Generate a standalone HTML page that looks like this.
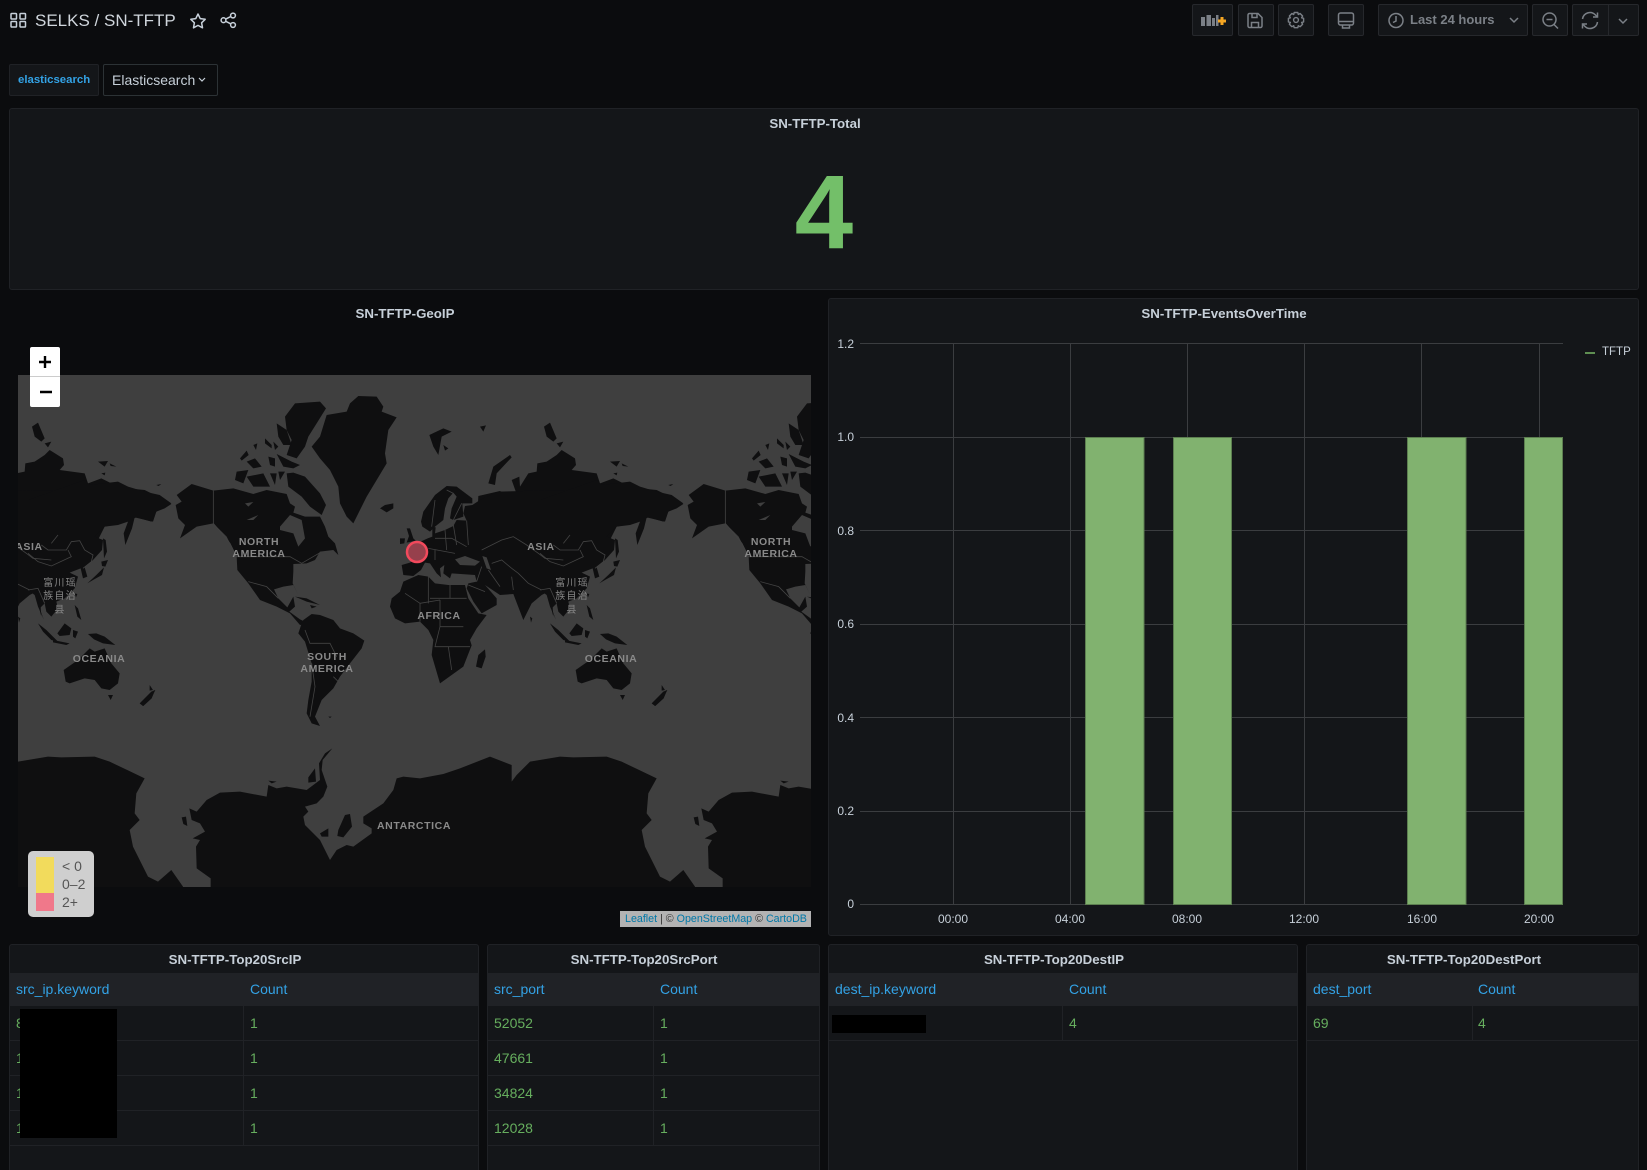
<!DOCTYPE html>
<html lang="en">
<head>
<meta charset="utf-8">
<title>SELKS / SN-TFTP</title>
<style>
html,body{margin:0;padding:0;width:1647px;height:1170px;overflow:hidden;background:#0b0c0e;font-family:"Liberation Sans","Noto Sans CJK SC",sans-serif;color:#c7d0d9}
*{box-sizing:border-box}
#root{position:relative;width:1647px;height:1170px;overflow:hidden}
.a{position:absolute}
.panel{position:absolute;background:#141619;border:1px solid #202226;border-radius:3px}
.ttl{position:absolute;font-size:13.3px;font-weight:bold;color:#c7d0d9;transform:translateX(-50%);white-space:nowrap;line-height:16px}
.btn{position:absolute;top:4px;height:32px;background:#141619;border:1px solid #26282c;border-radius:2px}
.btn svg{position:absolute;left:0;top:0}
.th{position:absolute;height:33px;top:973px;background:#202226}
.t{position:absolute;font-size:14px;line-height:16px;white-space:nowrap}
.b{color:#33a2e5}
.g{color:#66ae5e}
.hl{position:absolute;height:1px;background:#202226}
.vl{position:absolute;width:1px;background:#202226}
.yl{position:absolute;font-size:12px;line-height:14px;width:40px;text-align:right;left:814px;color:#c7d0d9}
.xl{position:absolute;font-size:12px;line-height:14px;width:50px;text-align:center;top:912px;color:#c7d0d9}
</style>
</head>
<body>
<div id="root">
<!-- top bar -->
<svg class="a" style="left:0;top:0" width="260" height="40" fill="none" stroke="#c7d0d9" stroke-width="1.5">
<rect x="11" y="13.5" width="5.5" height="5.5" rx=".8"/><rect x="20" y="13.5" width="5.5" height="5.5" rx=".8"/><rect x="11" y="21.5" width="5.5" height="5.5" rx=".8"/><rect x="20" y="21.5" width="5.5" height="5.5" rx=".8"/>
<path d="M198 14l2.2 4.600 5 .7-3.600 3.500.9 5-4.500-2.400-4.500 2.400.9-5-3.600-3.500 5-.7z" stroke-linejoin="round"/>
<circle cx="233" cy="15.500" r="2.400"/><circle cx="233" cy="25" r="2.400"/><circle cx="223.500" cy="20.200" r="2.400"/><path d="M225.700 19.100l5-2.500M225.700 21.300l5 2.500"/>
</svg>
<div class="t" style="left:35px;top:10px;font-size:17px;line-height:22px;color:#d0d6dc">SELKS / SN-TFTP</div>

<div class="btn" style="left:1192px;width:41px"><svg width="41" height="30"><g fill="#7b8087"><rect x="8" y="12" width="4" height="9"/><rect x="13.500" y="10" width="4.500" height="11"/><rect x="19" y="13" width="3" height="8"/><rect x="23" y="10" width="2.500" height="11"/></g><path d="M25 14.500h8v3h-8zM27.500 12h3v8h-3z" fill="#f5a623"/></svg></div>
<div class="btn" style="left:1238px;width:36px"><svg width="36" height="30" fill="none" stroke="#7b8087" stroke-width="1.5"><path d="M10.500 8.500h8.500l4 4v8.500a1.500 1.500 0 0 1-1.500 1.500h-11A1.500 1.500 0 0 1 9 21V10A1.500 1.500 0 0 1 10.500 8.500z"/><path d="M13 8.500v4h5v-4M12.500 22.500v-5h7v5"/></svg></div>
<div class="btn" style="left:1278px;width:36px"><svg width="36" height="30" fill="none" stroke="#7b8087" stroke-width="1.4"><circle cx="17" cy="15" r="2.400"/><path d="M15.200 8.500h3.600l.5 2 1.800-1 2.500 2.500-1 1.800 2 .5v3.600l-2 .5 1 1.800-2.500 2.500-1.800-1-.5 2h-3.600l-.5-2-1.800 1-2.500-2.500 1-1.800-2-.5v-3.600l2-.5-1-1.800 2.500-2.500 1.800 1z" transform="translate(0,-1)" stroke-linejoin="round"/></svg></div>
<div class="btn" style="left:1328px;width:36px"><svg width="36" height="30" fill="none" stroke="#7b8087" stroke-width="1.5"><rect x="9.500" y="8" width="15" height="12" rx="2"/><path d="M9.500 16.500h15M13.500 20v3h7v-3"/></svg></div>
<div class="btn" style="left:1378px;width:150px"><svg width="150" height="30" fill="none" stroke="#7b8087" stroke-width="1.5"><circle cx="17" cy="15.500" r="7"/><path d="M17 11v5l-3 1.500"/><path d="M131 13l4 4 4-4"/></svg><div class="t" style="left:31px;top:7px;font-weight:bold;font-size:13px;color:#7b8087">Last 24 hours</div></div>
<div class="btn" style="left:1532px;width:36px"><svg width="36" height="30" fill="none" stroke="#7b8087" stroke-width="1.5"><circle cx="16.500" cy="14.500" r="6.500"/><path d="M13.500 14.500h6M21 19.500l4 4"/></svg></div>
<div class="btn" style="left:1572px;width:37px;border-radius:2px 0 0 2px"><svg width="37" height="30" fill="none" stroke="#7b8087" stroke-width="1.5"><path d="M9.500 14a7.500 7.500 0 0 1 13-4l2 2M24.500 17a7.500 7.500 0 0 1-13 4l-2-2"/><path d="M24.500 7.500v4.500h-4.500M9.500 23.500v-4.500h4.500"/></svg></div>
<div class="btn" style="left:1608px;width:31px;border-radius:0 2px 2px 0"><svg width="31" height="30" fill="none" stroke="#7b8087" stroke-width="1.5"><path d="M10 14l4 4 4-4"/></svg></div>

<!-- variables -->
<div class="a" style="left:9px;top:64px;width:90px;height:32px;background:#141619;border:1px solid #202226;border-radius:2px"></div>
<div class="t b" style="left:18px;top:72px;font-size:11.400px;font-weight:bold">elasticsearch</div>
<div class="a" style="left:103px;top:64px;width:115px;height:32px;border:1px solid #2c3235;border-radius:2px;background:#0b0c0e"></div>
<div class="t" style="left:112px;top:72px">Elasticsearch</div>
<svg class="a" style="left:197px;top:76px" width="10" height="8" fill="none" stroke="#c7d0d9" stroke-width="1.2"><path d="M2 2l3 3 3-3"/></svg>

<!-- total -->
<div class="panel" style="left:9px;top:108px;width:1630px;height:182px"></div>
<div class="ttl" style="left:815px;top:116px">SN-TFTP-Total</div>
<div class="a" style="left:724px;top:148px;width:200px;text-align:center;font-size:105px;line-height:130px;font-weight:bold;color:#73bf69">4</div>

<!-- map -->
<div class="ttl" style="left:405px;top:306px">SN-TFTP-GeoIP</div>
<svg class="a" style="left:0;top:0" width="1647" height="1170">
<defs>
<clipPath id="mc"><rect x="18" y="375" width="793" height="512"/></clipPath>
<g id="w">
 <g fill="#0f0f10">
 <!-- N America, Greenland, arctic -->
 <g transform="translate(0,330) scale(.33333)">
  <path d="M527 525L545 515 530 495 575 462 640 482 700 475 760 492 800 480 860 492 870 520 885 530 880 548 915 560 960 560 975 590 985 620 1005 640 1015 675 1000 660 960 665 945 690 920 700 880 702 880 725 878 760 895 795 880 765 850 770 822 778 835 805 862 832 880 800 885 830 868 845 900 868 925 880 900 885 870 850 830 830 780 810 745 760 712 720 710 680 695 650 680 620 640 580 590 590 540 625 555 585 535 565Z"/>
  <path d="M1075 198L1130 200 1150 230 1145 245 1190 262 1165 300 1155 370 1160 400 1130 450 1100 500 1060 580 1040 560 1020 520 1015 470 990 420 960 385 935 350 960 320 980 255 1040 245 1050 220Z"/>
  <path d="M855 260L885 220 960 215 978 235 950 280 925 320 915 350 890 385 860 375 875 330 860 300Z"/>
  <path d="M860 430L880 428 915 440 960 490 978 525 965 555 930 530 905 500 865 470Z"/>
  <path d="M720 385L740 362 746 375 725 392ZM740 395L765 385 785 410 760 415ZM795 325L815 345 815 355 795 340ZM830 280L860 300 875 345 850 345 835 320ZM805 380L825 385 825 410 810 405ZM830 372L875 395 900 405 880 415 850 410ZM710 425L745 420 730 460 705 450ZM740 440L790 430 810 470 760 470ZM810 430L830 430 825 465ZM835 425L855 425 840 450ZM760 345L772 340 768 360ZM820 335L835 350 825 360Z"/>
  <path d="M885 800L920 805 960 825 920 815ZM930 825L950 830 935 835Z"/>
 </g>
 <!-- Russia north & arctic islands -->
 <g transform="translate(400,330) scale(.33333)">
  <path d="M235 498L300 483 330 500 345 525 358 515 335 450 358 440 360 470 385 430 410 425 412 400 440 395 470 375 485 360 525 385 528 405 515 420 590 430 600 460 640 445 680 465 720 475 770 480 800 495 850 522 830 535 805 545 790 575 745 562 700 580 650 590 600 690 300 720 230 600Z"/>
  <path d="M265 460L280 410 330 375 335 382 290 430 285 465ZM88 315L130 295 155 305 125 320 115 375 100 350ZM240 290L258 286 250 305ZM432 290L450 278 470 325 460 335 440 320ZM470 340L490 335 480 352ZM630 395L660 393 650 410ZM665 400L685 410 668 408ZM805 465L820 462 812 468ZM130 345L145 355 135 362ZM640 430L652 428 650 436Z"/>
 </g>
 <!-- Europe, west Asia, Africa -->
 <g transform="translate(385,470) scale(.33333)">
  <path d="M50 285L75 278 95 265 85 225 128 205 142 200 142 170 152 172 150 190 180 180 205 168 215 150 245 152 235 130 240 108 262 105 285 90 340 65 540 60 540 340 500 370 505 440 495 400 490 365 470 375 440 400 415 450 385 372 345 375 300 345 335 385 335 405 290 430 265 395 245 355 250 340 275 335 270 315 200 310 195 325 175 310 178 285 165 295 168 322 155 310 135 280 120 278 108 300 85 318 55 315Z"/>
  <path d="M108 155L115 125 150 75 185 48 215 50 262 85 262 100 232 100 235 140 205 150 195 145 200 115 215 80 205 68 190 85 180 115 175 150 150 170 135 185 112 170Z"/>
  <path d="M15 410L20 385 45 365 55 335 100 315 130 320 150 340 190 345 240 345 250 385 280 430 305 435 275 475 255 510 260 526 235 590 165 640 140 555 145 510 130 480 105 455 60 460 30 445Z"/>
  <path d="M65 175L75 175 85 205 92 212 65 218 72 198ZM45 205L60 205 58 220 45 222ZM0 105L25 100 25 115 5 127-15 115Z"/>
  <path d="M435 440L442 445 438 458Z"/>
 </g>
 <!-- East Asia -->
 <g transform="translate(540,480) scale(.33333)">
  <path d="M0 60L170 0 185 15 270 5 300 20 350 35 395 45 430 70 400 85 385 95 375 125 320 112 312 145 292 195 287 160 300 125 270 135 230 140 200 170 225 180 222 210 195 240 170 262 178 290 165 295 158 265 125 278 150 290 140 325 110 355 85 365 90 385 70 410 55 395 50 370 35 385 48 420 30 380 20 345 0 330Z"/>
  <path d="M225 175L233 180 237 215 228 235ZM220 245L240 240 232 260 222 258ZM178 310L205 285 228 262 222 285 195 300ZM140 375L150 385 160 420 148 410ZM140 340L148 342 144 352Z"/>
 </g>
 <!-- S America and Antarctica -->
 <g transform="translate(0,620) scale(.33333)">
  <path d="M905 10L895 40 915 65 935 130 935 185 925 240 920 280 935 310 960 318 945 290 965 240 1000 205 1020 170 1050 130 1085 85 1093 62 1060 40 1020 25 1000 0 960-15 935-18 910 0Z"/>
  <path d="M985 290L995 290 990 294ZM420 250L445 225 465 210 455 235 430 258Z"/>
  <path d="M632 815L632 775 590 745 588 680 600 660 578 655 615 635 600 610 575 600 568 565 590 575 620 540 660 518 720 515 800 530 805 495 830 505 860 500 920 510 960 480 957 430 975 400 997 385 968 420 965 450 982 500 970 530 950 550 915 560 925 575 910 590 915 615 960 660 990 720 1010 690 1040 675 1060 680 1115 640 1115 625 1090 610 1090 590 1150 550 1180 510 1190 475 1210 470 1260 475 1330 462 1380 445 1470 410 1535 435 1535 485 1550 465 1590 425 1680 410 1720 412 1820 410 1865 425 1970 475 1945 520 1940 580 1955 600 1925 630 1935 680 1980 770 2010 785 2050 750 2085 800 2085 815Z"/>
  <path d="M545 592L558 590 562 618 550 612ZM1015 630L1035 585 1050 582 1056 620 1030 652 1012 648ZM960 640L985 625 985 650 965 650ZM925 472L945 445 948 485 925 488ZM805 482L830 485 815 490Z"/>
 </g>
 <!-- Africa islands, Australasia -->
 <g transform="translate(400,620) scale(.33333)">
  <path d="M228 140L235 105 255 88 257 110 245 145Z"/>
  <path d="M527 150L570 120 605 85 620 95 650 85 670 130 695 160 690 190 665 210 640 205 620 180 590 175 545 190 533 185Z"/>
  <path d="M660 225L675 225 668 240Z"/>
  <path d="M755 250L780 225 790 215 802 210 790 235 765 258ZM785 195L795 210 785 212Z"/>
  <path d="M450 10L475 30 510 65 490 60 465 35ZM495 60L545 70 535 75 495 67ZM508 40L530 10 550 25 545 45 515 48ZM555 30L570 35 562 55 555 50ZM600 42L625 40 650 50 682 75 645 70 618 58Z"/>
 </g>
 </g>
 <!-- oceans cut out -->
 <g fill="#3f3f3f">
  <path transform="translate(0,330) scale(.33333)" d="M840 590L870 555 905 570 915 625 895 650 880 610 840 600ZM735 520L760 516 745 530ZM740 570L775 555 760 570Z"/>
  <path transform="translate(385,470) scale(.33333)" d="M210 268L240 258 285 275 270 287 225 285ZM292 258L305 262 318 300 305 295Z"/>
 </g>
 <!-- borders -->
 <g fill="none" stroke="#434343" stroke-width="2.400">
  <g transform="translate(0,330) scale(.33333)">
   <path d="M640 482V580L690 640 710 680 870 680 905 700 960 668"/>
   <path d="M745 755L800 770 835 805"/>
  </g>
  <g transform="translate(0,620) scale(.33333)">
   <path d="M915 30L930 70 990 70 1010 110M935 130L945 200 930 290M1000 170L1020 190"/>
  </g>
  <g transform="translate(385,470) scale(.33333)">
   <path d="M150 90L140 170M185 60L205 70M230 100L205 150"/>
   <path d="M150 205L200 205 245 230M130 235L210 250M150 240L150 270M205 165L215 225M180 180L185 240M245 152L250 225"/>
   <path d="M290 240L320 225 350 210 385 200 425 225 460 250 480 265 535 270"/>
   <path d="M320 280L350 270 380 295 400 310 430 340 470 360M380 320L385 360M310 300L345 350M290 290L275 335M250 345L300 365"/>
   <path d="M130 320L130 400M60 370L105 400 105 455M195 345L195 385 245 385M135 385L245 385M105 400L165 390M165 390L165 470 235 470M165 470L150 530 255 530M190 530L200 600"/>
  </g>
  <g transform="translate(540,480) scale(.33333)">
   <path d="M40 195L60 210 115 210 130 185 155 182 170 210 195 225 190 245 165 265M0 220L30 245 70 258 130 230 120 210M70 190L90 165M0 330L30 325 50 370"/>
  </g>
 </g>
</g>
</defs>
<rect x="18" y="375" width="793" height="512" fill="#3f3f3f"/>
<g clip-path="url(#mc)">
 <use href="#w" x="-512"/><use href="#w"/><use href="#w" x="512"/>
 <g font-family="'Liberation Sans',sans-serif" font-weight="bold" font-size="10.500" fill="#8a8a8a" text-anchor="middle" letter-spacing=".6">
  <text x="259" y="545">NORTH</text><text x="259" y="557">AMERICA</text>
  <text x="771" y="545">NORTH</text><text x="771" y="557">AMERICA</text>
  <text x="541" y="550">ASIA</text><text x="29" y="550">ASIA</text>
  <text x="439" y="619">AFRICA</text>
  <text x="99" y="662">OCEANIA</text><text x="611" y="662">OCEANIA</text>
  <text x="327" y="660">SOUTH</text><text x="327" y="672">AMERICA</text>
  <text x="414" y="829">ANTARCTICA</text>
  <g font-family="'Liberation Sans','Noto Sans CJK SC',sans-serif" font-weight="normal" font-size="10" letter-spacing="1.200" fill="#858585">
   <text x="572" y="586">富川瑶</text><text x="572" y="599">族自治</text><text x="572" y="613">县</text>
   <text x="60" y="586">富川瑶</text><text x="60" y="599">族自治</text><text x="60" y="613">县</text>
  </g>
 </g>
</g>
<circle cx="417" cy="552" r="10" fill="#96404c" stroke="#f2495c" stroke-width="2.500"/>
</svg>
<div class="a" style="left:30px;top:347px;width:30px;height:60px;background:#fff;border-radius:2px"></div>
<div class="a" style="left:30px;top:376px;width:30px;height:1px;background:#ccc"></div>
<svg class="a" style="left:30px;top:347px" width="30" height="60"><path d="M9 15h12M15 9v12M10 45h12" stroke="#000" stroke-width="2.400" fill="none"/></svg>
<div class="a" style="left:28px;top:851px;width:66px;height:66px;background:#cfcfcf;border-radius:5px"></div>
<div class="a" style="left:36px;top:857px;width:18px;height:36px;background:#f2db5c"></div>
<div class="a" style="left:36px;top:893px;width:18px;height:18px;background:#f0788a"></div>
<div class="t" style="left:62px;top:858px;color:#555">&lt; 0</div>
<div class="t" style="left:62px;top:876px;color:#555">0–2</div>
<div class="t" style="left:62px;top:894px;color:#555">2+</div>
<div class="a" style="left:620px;top:911px;width:191px;height:16px;background:#b3b3b3"></div>
<div class="t" style="left:625px;top:912px;font-size:10.700px;line-height:14px;color:#333"><span style="color:#0078a8">Leaflet</span> | © <span style="color:#0078a8">OpenStreetMap</span> © <span style="color:#0078a8">CartoDB</span></div>

<!-- graph -->
<div class="panel" style="left:828px;top:298px;width:811px;height:638px"></div>
<div class="ttl" style="left:1224px;top:306px">SN-TFTP-EventsOverTime</div>
<svg class="a" style="left:828px;top:298px" width="811" height="638" shape-rendering="crispEdges">
<g transform="translate(-828,-298)">
<g stroke="#3b3d40" stroke-width="1">
<path d="M860 343.500H1563M860 437.500H1563M860 530.500H1563M860 624.500H1563M860 717.500H1563M860 811.500H1563M860 904.500H1563"/>
<path d="M953.500 344V904M1070.500 344V904M1187.500 344V904M1304.500 344V904M1421.500 344V904M1539.500 344V904"/>
</g>
<g fill="#81b26f" stroke="#5d7f50" stroke-width="1">
<rect x="1085.500" y="437.500" width="58.500" height="467"/>
<rect x="1173.500" y="437.500" width="58" height="467"/>
<rect x="1407.500" y="437.500" width="58.500" height="467"/>
<rect x="1524.500" y="437.500" width="38" height="467"/>
</g>
</g>
</svg>
<div class="yl" style="top:337px">1.2</div>
<div class="yl" style="top:430px">1.0</div>
<div class="yl" style="top:524px">0.8</div>
<div class="yl" style="top:617px">0.6</div>
<div class="yl" style="top:711px">0.4</div>
<div class="yl" style="top:804px">0.2</div>
<div class="yl" style="top:897px">0</div>
<div class="xl" style="left:928px">00:00</div>
<div class="xl" style="left:1045px">04:00</div>
<div class="xl" style="left:1162px">08:00</div>
<div class="xl" style="left:1279px">12:00</div>
<div class="xl" style="left:1397px">16:00</div>
<div class="xl" style="left:1514px">20:00</div>
<div class="a" style="left:1585px;top:352px;width:10px;height:2px;background:#5f8f52"></div>
<div class="t" style="left:1602px;top:344px;font-size:11.500px;color:#c7d0d9">TFTP</div>

<!-- tables -->
<div class="panel" style="left:9px;top:944px;width:470px;height:240px"></div>
<div class="panel" style="left:487px;top:944px;width:333px;height:240px"></div>
<div class="panel" style="left:828px;top:944px;width:470px;height:240px"></div>
<div class="panel" style="left:1306px;top:944px;width:333px;height:240px"></div>

<div class="ttl" style="left:235px;top:952px">SN-TFTP-Top20SrcIP</div>
<div class="ttl" style="left:644px;top:952px">SN-TFTP-Top20SrcPort</div>
<div class="ttl" style="left:1054px;top:952px">SN-TFTP-Top20DestIP</div>
<div class="ttl" style="left:1464px;top:952px">SN-TFTP-Top20DestPort</div>

<div class="th" style="left:10px;width:468px"></div>
<div class="th" style="left:488px;width:331px"></div>
<div class="th" style="left:829px;width:468px"></div>
<div class="th" style="left:1307px;width:331px"></div>

<div class="vl" style="left:243px;top:973px;height:172px"></div>
<div class="vl" style="left:653px;top:973px;height:172px"></div>
<div class="vl" style="left:1062px;top:973px;height:67px"></div>
<div class="vl" style="left:1472px;top:973px;height:67px"></div>

<div class="hl" style="left:10px;width:468px;top:1040px"></div>
<div class="hl" style="left:10px;width:468px;top:1075px"></div>
<div class="hl" style="left:10px;width:468px;top:1110px"></div>
<div class="hl" style="left:10px;width:468px;top:1145px"></div>
<div class="hl" style="left:488px;width:331px;top:1040px"></div>
<div class="hl" style="left:488px;width:331px;top:1075px"></div>
<div class="hl" style="left:488px;width:331px;top:1110px"></div>
<div class="hl" style="left:488px;width:331px;top:1145px"></div>
<div class="hl" style="left:829px;width:468px;top:1040px"></div>
<div class="hl" style="left:1307px;width:331px;top:1040px"></div>

<div class="t b" style="left:16px;top:981px">src_ip.keyword</div>
<div class="t b" style="left:250px;top:981px">Count</div>
<div class="t b" style="left:494px;top:981px">src_port</div>
<div class="t b" style="left:660px;top:981px">Count</div>
<div class="t b" style="left:835px;top:981px">dest_ip.keyword</div>
<div class="t b" style="left:1069px;top:981px">Count</div>
<div class="t b" style="left:1313px;top:981px">dest_port</div>
<div class="t b" style="left:1478px;top:981px">Count</div>

<div class="t g" style="left:16px;top:1015px">8</div>
<div class="t g" style="left:16px;top:1050px">1</div>
<div class="t g" style="left:16px;top:1085px">1</div>
<div class="t g" style="left:16px;top:1120px">1</div>
<div class="t g" style="left:250px;top:1015px">1</div>
<div class="t g" style="left:250px;top:1050px">1</div>
<div class="t g" style="left:250px;top:1085px">1</div>
<div class="t g" style="left:250px;top:1120px">1</div>
<div class="t g" style="left:494px;top:1015px">52052</div>
<div class="t g" style="left:494px;top:1050px">47661</div>
<div class="t g" style="left:494px;top:1085px">34824</div>
<div class="t g" style="left:494px;top:1120px">12028</div>
<div class="t g" style="left:660px;top:1015px">1</div>
<div class="t g" style="left:660px;top:1050px">1</div>
<div class="t g" style="left:660px;top:1085px">1</div>
<div class="t g" style="left:660px;top:1120px">1</div>
<div class="t g" style="left:1069px;top:1015px">4</div>
<div class="t g" style="left:1313px;top:1015px">69</div>
<div class="t g" style="left:1478px;top:1015px">4</div>

<div class="a" style="left:20px;top:1009px;width:97px;height:129px;background:#000"></div>
<div class="a" style="left:832px;top:1015px;width:94px;height:18px;background:#000"></div>
</div>
</body>
</html>
